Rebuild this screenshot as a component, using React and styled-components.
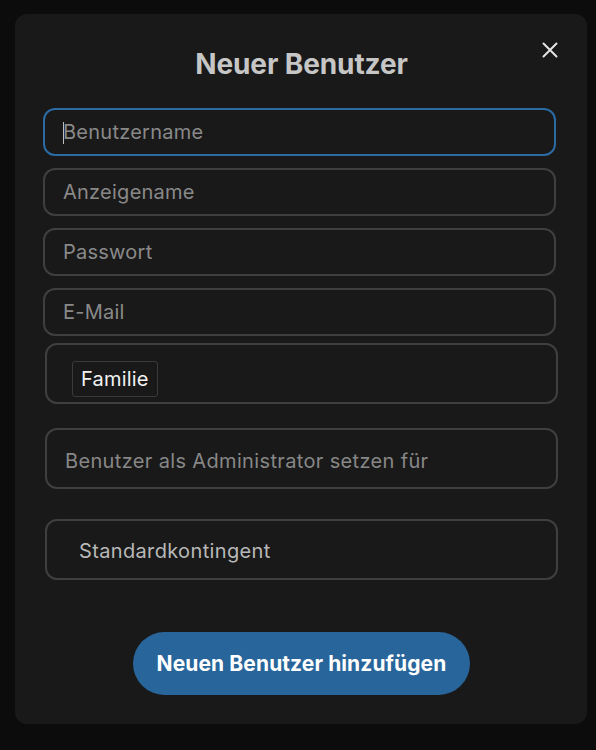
import React from 'react';
import styled, { createGlobalStyle } from 'styled-components';

const GlobalStyle = createGlobalStyle`
  html, body {
    margin: 0;
    padding: 0;
    background: #0c0c0c;
    font-family: Inter, "Noto Sans", sans-serif;
  }
  * { box-sizing: border-box; }
`;

const Page = () => {
  return (
    <Backdrop>
      <Modal>
        <CloseButton type="button" aria-label="Schließen">
          <svg width="16" height="16" viewBox="0 0 16 16">
            <path d="M1.5 1.5 L14.5 14.5 M14.5 1.5 L1.5 14.5" stroke="#e4e4e4" strokeWidth="2" strokeLinecap="round" />
          </svg>
        </CloseButton>
        <Title>Neuer Benutzer</Title>

        <Fields>
          <Field $focused>
            <Caret />
            <Input placeholder="Benutzername" />
          </Field>
          <Field>
            <Input placeholder="Anzeigename" />
          </Field>
          <Field>
            <Input type="password" placeholder="Passwort" />
          </Field>
          <Field>
            <Input placeholder="E-Mail" />
          </Field>
        </Fields>

        <Box $top={7} $pad={25} $shift={11}>
          <Chip>Familie</Chip>
        </Box>

        <Box $top={24} $pad={18} $shift={5}>
          <BoxText $muted>Benutzer als Administrator setzen für</BoxText>
        </Box>

        <Box $top={30} $pad={32} $shift={2}>
          <BoxText>Standardkontingent</BoxText>
        </Box>

        <Footer>
          <SubmitButton type="button">Neuen Benutzer hinzufügen</SubmitButton>
        </Footer>
      </Modal>
    </Backdrop>
  );
};

export default function App() {
  return (
    <>
      <GlobalStyle />
      <Page />
    </>
  );
}

const Backdrop = styled.div`
  width: 596px;
  height: 750px;
  padding: 14px 9px 0 15px;
`;

const Modal = styled.div`
  position: relative;
  width: 572px;
  height: 710px;
  background: #191919;
  border-radius: 12px;
  padding: 33px 31px 28px 28px;
  display: flex;
  flex-direction: column;
`;

const CloseButton = styled.button`
  position: absolute;
  top: 28px;
  right: 29px;
  width: 16px;
  height: 16px;
  padding: 0;
  border: none;
  background: none;
  display: flex;
  cursor: pointer;
`;

const Title = styled.h2`
  margin: 0 0 27px 4px;
  text-align: center;
  font-size: 28px;
  line-height: 34px;
  font-weight: 700;
  color: #c6c6c6;
  letter-spacing: -0.1px;
`;

const Fields = styled.div`
  display: flex;
  flex-direction: column;
  gap: 12px;
`;

const Field = styled.label`
  position: relative;
  display: flex;
  align-items: center;
  height: 48px;
  border: 2px solid ${p => (p.$focused ? '#2c6aa3' : '#3f3f3f')};
  border-radius: 12px;
  padding: 0 18px;
`;

const Caret = styled.span`
  position: absolute;
  left: 18px;
  top: 12px;
  width: 1px;
  height: 22px;
  background: #bdbdbd;
`;

const Input = styled.input`
  width: 100%;
  border: none;
  outline: none;
  background: transparent;
  font-family: inherit;
  font-size: 20px;
  letter-spacing: 0.25px;
  color: #e0e0e0;
  padding: 0;

  &::placeholder {
    color: #898989;
  }
`;

const Box = styled.div`
  margin-top: ${p => p.$top}px;
  margin-left: 2px;
  margin-right: -2px;
  height: 61px;
  border: 2px solid #3f3f3f;
  border-radius: 12px;
  padding: ${p => p.$shift}px ${p => p.$pad}px 0;
  display: flex;
  align-items: center;
`;

const Chip = styled.span`
  display: inline-flex;
  align-items: center;
  height: 36px;
  padding: 0 8px;
  border: 1px solid #3a3a3a;
  border-radius: 3px;
  font-size: 20px;
  letter-spacing: 0.2px;
  color: #f2f2f2;
`;

const BoxText = styled.span`
  font-size: 20px;
  letter-spacing: 0.35px;
  color: ${p => (p.$muted ? '#878787' : '#b8b8b8')};
`;

const Footer = styled.div`
  margin-top: 52px;
  padding-left: 4px;
  display: flex;
  justify-content: center;
`;

const SubmitButton = styled.button`
  width: 337px;
  height: 63px;
  border: none;
  border-radius: 32px;
  background: #28659a;
  color: #ffffff;
  font-family: inherit;
  font-size: 21px;
  font-weight: 700;
  letter-spacing: 0.1px;
  cursor: pointer;
`;
